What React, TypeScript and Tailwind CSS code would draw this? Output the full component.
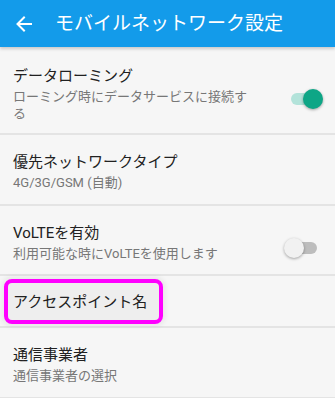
import React, { useState } from 'react';

const font = { fontFamily: 'Roboto, "Noto Sans CJK JP", sans-serif' };

function Toggle({ on }: { on: boolean }) {
  return (
    <div className="relative w-[32px] h-[20px] flex items-center shrink-0">
      <div className={`w-[26px] h-[12px] rounded-full ${on ? 'bg-[#b3e3da]' : 'bg-[#bdbdbd]'}`} />
      {/* thumb sits over the track */}
      <div
        className={`absolute top-0 w-[20px] h-[20px] rounded-full shadow-[0_1px_3px_rgba(0,0,0,0.35)] ${
          on ? 'left-[12px] bg-[#0ea686]' : 'left-[-7px] bg-[#f1f1f1]'
        }`}
      />
    </div>
  );
}

type Row = {
  title: string;
  sub?: string;
  toggle?: boolean;
  pt: string;
  h: string;
  marked?: boolean;
};

export default function App() {
  const [roaming, setRoaming] = useState(true);
  const [volte, setVolte] = useState(false);

  const rows: Row[] = [
    { title: 'データローミング', sub: 'ローミング時にデータサービスに接続する', toggle: roaming, pt: 'pt-[18px]', h: 'h-[88px]' },
    { title: '優先ネットワークタイプ', sub: '4G/3G/GSM (自動)', pt: 'pt-[16px]', h: 'h-[71px]' },
    { title: 'VoLTEを有効', sub: '利用可能な時にVoLTEを使用します', toggle: volte, pt: 'pt-[16px]', h: 'h-[70px]' },
    { title: 'アクセスポイント名', pt: 'pt-[15px]', h: 'h-[52px]', marked: true },
    { title: '通信事業者', sub: '通信事業者の選択', pt: 'pt-[16px]', h: 'h-[71px]' },
  ];

  return (
    <div className="w-[335px] h-[398px] overflow-hidden bg-[#f6f6f6]" style={font}>
      {/* App bar */}
      <div className="relative z-10 h-[47px] bg-[#139bea] flex items-center shadow-[0_2px_3px_rgba(0,0,0,0.18)]">
        <svg width="18" height="18" viewBox="0 0 18 18" className="ml-[15px]">
          <path d="M16 9H3M9 2.5L2.5 9L9 15.5" stroke="white" strokeWidth="2" fill="none" strokeLinecap="square" />
        </svg>
        <span className="ml-[22px] text-white text-[19px] leading-none">モバイルネットワーク設定</span>
      </div>

      {rows.map((r, i) => (
        <div
          key={r.title}
          className={`relative flex items-start pl-[13px] pr-[12px] ${r.pt} ${r.h} border-b-2 border-[#e4e4e4]`}
          onClick={() => {
            if (i === 0) setRoaming(!roaming);
            if (i === 2) setVolte(!volte);
          }}
        >
          {r.marked && (
            <div className="absolute left-[4px] top-[3px] w-[159px] h-[45px] rounded-[8px] border-[4px] border-[#ff00ff] bg-[#eeeeee] shadow-[0_0_4px_3px_rgba(0,0,0,0.05)]" />
          )}
          <div className="relative w-[240px]">
            <div className="text-[15px] leading-[22px] text-[#212121]">{r.title}</div>
            {r.sub && <div className="mt-[1px] text-[13px] leading-[17px] text-[#777777]">{r.sub}</div>}
          </div>
          {r.toggle !== undefined && (
            <div className="ml-auto self-center">
              <Toggle on={r.toggle} />
            </div>
          )}
        </div>
      ))}
    </div>
  );
}
